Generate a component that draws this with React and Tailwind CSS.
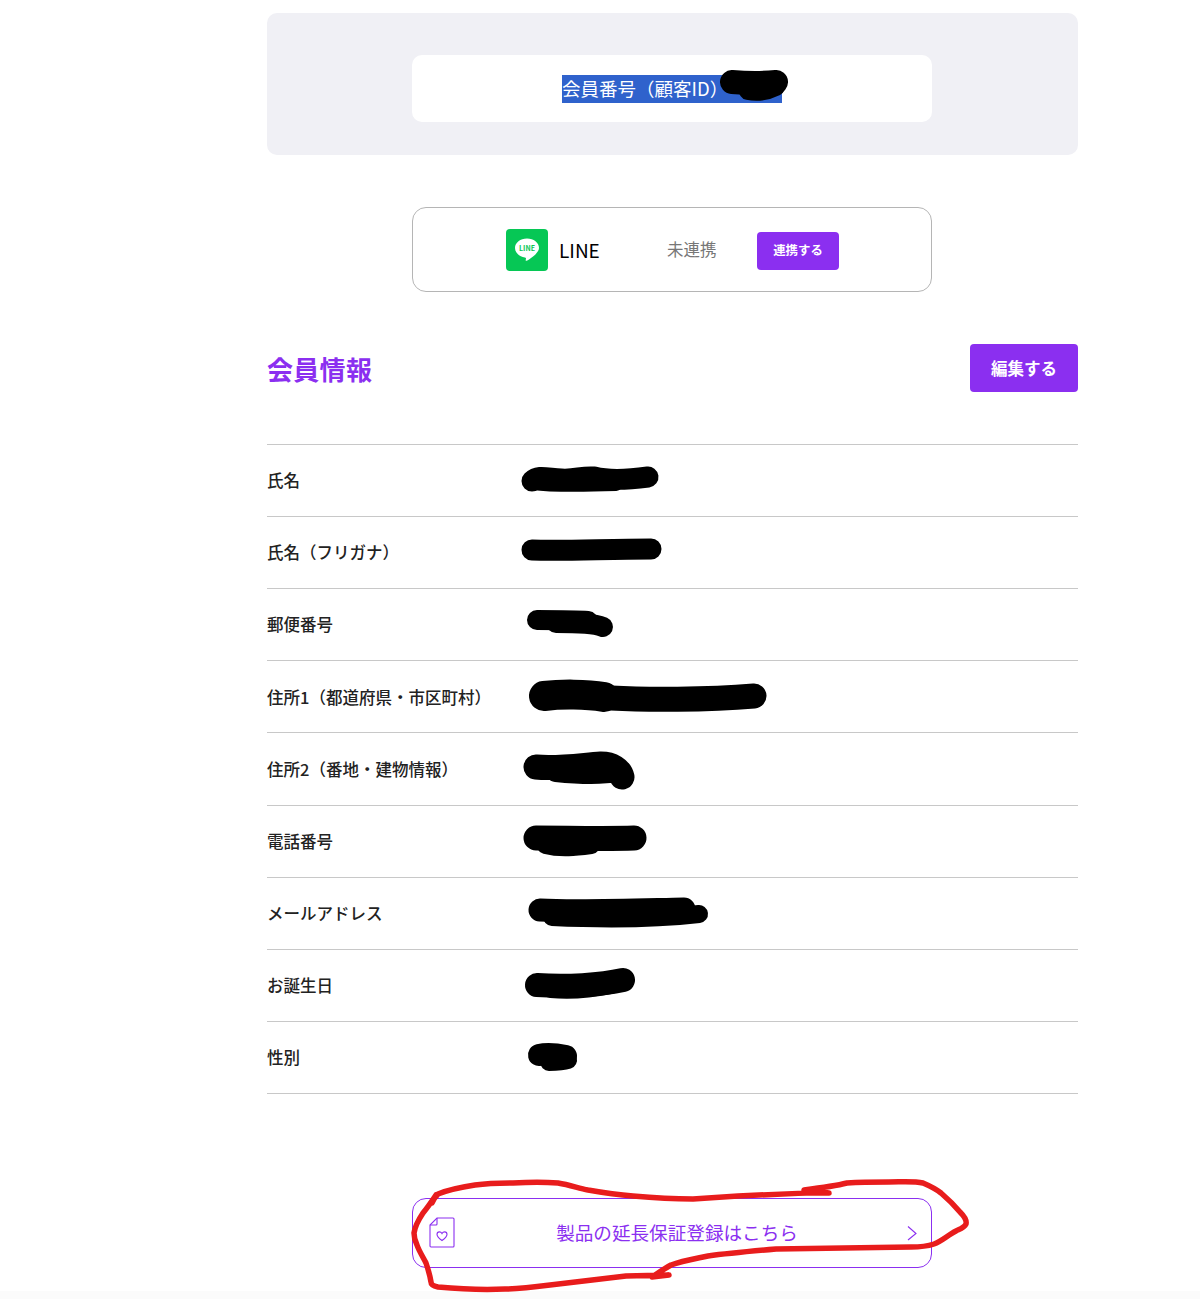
const font = { fontFamily: '"Noto Sans CJK JP", "Noto Sans", sans-serif' };

const rows = [
  {
    label: "氏名",
    marks: [
      { d: "M16 20 C22 14 30 17 45 18 C60 19 65 15 78 16 C90 19 110 19 132 16", w: 21 },
      { d: "M17 22 C40 25 70 24 100 23", w: 14 },
    ],
  },
  { label: "氏名（フリガナ）", marks: [{ d: "M16 17 C50 18 90 16 135 16", w: 21 }] },
  {
    label: "郵便番号",
    marks: [
      { d: "M21 15 C40 15 60 15 72 16", w: 20 },
      { d: "M40 18 C60 18 78 18 87 22", w: 20 },
    ],
  },
  {
    label: "住所1（都道府県・市区町村）",
    marks: [
      { d: "M28 19 C45 17 70 17 88 20", w: 30 },
      { d: "M95 21 C130 23 190 23 238 19", w: 25 },
    ],
  },
  {
    label: "住所2（番地・建物情報）",
    marks: [
      { d: "M20 18 C40 20 60 17 85 15 C96 15 104 20 106 28", w: 25 },
      { d: "M40 22 C60 24 85 25 102 22", w: 22 },
    ],
  },
  {
    label: "電話番号",
    marks: [
      { d: "M20 17 C50 17 90 18 118 17", w: 25 },
      { d: "M30 23 C45 27 60 25 75 23", w: 20 },
    ],
  },
  {
    label: "メールアドレス",
    marks: [
      { d: "M24 17 C60 19 120 17 168 16", w: 23 },
      { d: "M36 24 C80 26 140 26 183 21", w: 18 },
    ],
  },
  {
    label: "お誕生日",
    marks: [
      { d: "M21 20 C50 22 85 20 107 15", w: 24 },
      { d: "M35 24 C55 26 75 24 95 20", w: 18 },
    ],
  },
  {
    label: "性別",
    marks: [
      { d: "M23 18 C32 16 40 17 50 19", w: 22 },
      { d: "M33 25 C40 25 46 25 52 23", w: 18 },
    ],
  },
];

const RedactMark = ({ marks }) => (
  <svg width="260" height="40" viewBox="0 0 260 40" fill="none" className="overflow-visible">
    {marks.map((m) => (
      <path key={m.d} d={m.d} stroke="#000" strokeWidth={m.w} strokeLinecap="round" strokeLinejoin="round" />
    ))}
  </svg>
);

const LineLogo = () => (
  <svg width="42" height="42" viewBox="0 0 42 42" className="shrink-0">
    <rect width="42" height="42" rx="4" fill="#06c755" />
    <path
      d="M21 9.5c-6.7 0-12 4.2-12 9.5 0 4.7 4.2 8.6 9.9 9.4.4.1.9.3 1 .6.1.3.1.8 0 1.1l-.2 1c0 .3-.2 1.1 1 .6 1.200-.5 6.500-3.800 8.900-6.500C31.200 23.500 33 21.400 33 19c0-5.300-5.300-9.500-12-9.500z"
      fill="#fff"
    />
    <text x="21" y="21.500" textAnchor="middle" fontSize="7" fontWeight="700" fill="#06c755" style={font}>
      LINE
    </text>
  </svg>
);

const WarrantyIcon = () => (
  <svg width="26" height="31" viewBox="0 0 26 31" fill="none" stroke="#8b2ff0" strokeWidth="1.100" className="shrink-0">
    <path d="M8 1h16a1 1 0 0 1 1 1v27a1 1 0 0 1-1 1H2a1 1 0 0 1-1-1V8z" />
    <path d="M8 1v6a1 1 0 0 1-1 1H1" />
    <path d="M13 23.500c-3-2.300-5-4-5-6.100 0-1.500 1.100-2.500 2.400-2.500 1.100 0 2 .6 2.600 1.700.6-1.100 1.500-1.700 2.600-1.700 1.300 0 2.400 1 2.400 2.500 0 2.100-2 3.800-5 6.100z" />
  </svg>
);

const App = () => {
  return (
    <div className="relative h-[1299px] w-full overflow-hidden bg-white text-[#222]" style={font}>
      <div className="ml-[267px] w-[811px] pt-[13px]">
        <div className="h-[142px] rounded-[10px] bg-[#f0f0f5] pl-[145px] pt-[42px]">
          <div className="flex h-[67px] w-[520px] items-center justify-center rounded-[10px] bg-white">
            <div className="relative flex h-[28px] w-[220px] items-center whitespace-nowrap bg-[#2f62cc] text-[18.5px] leading-none text-white">
              会員番号（顧客ID）
              <svg width="68" height="33" viewBox="0 0 68 33" fill="none" stroke="#000" strokeLinecap="round" className="absolute left-[158px] top-[-5px]">
                <path d="M12 12 C25 13 45 13 56 12" strokeWidth="24" />
                <path d="M28 21 C38 23 48 21 56 17" strokeWidth="18" />
              </svg>
            </div>
          </div>
        </div>

        <div className="ml-[145px] mt-[52px] flex h-[85px] w-[520px] items-center rounded-[14px] border border-[#b5b5b5] pl-[93px]">
          <LineLogo />
          <span className="ml-[11px] mt-[1px] w-[108px] text-[19px] text-black">LINE</span>
          <span className="w-[90px] text-[16.5px] text-[#777]">未連携</span>
          <button className="mt-[2px] h-[38px] w-[82px] rounded-[4px] bg-[#8b2ff0] text-[12.4px] font-bold text-white">連携する</button>
        </div>

        <div className="mt-[52px] flex h-[48px] items-center justify-between">
          <h2 className="text-[26px] font-bold tracking-[0.3px] text-[#8b2ff0]">会員情報</h2>
          <button className="h-[48px] w-[108px] rounded-[4px] bg-[#8b2ff0] text-[16.5px] font-bold text-white">編集する</button>
        </div>

        <div className="mt-[52px] border-t border-[#c8c8c8]">
          {rows.map((row) => (
            <div key={row.label} className="flex h-[72.11px] items-center border-b border-[#c8c8c8] text-[16.5px] font-medium">
              <div className="w-[249px] shrink-0">{row.label}</div>
              <RedactMark marks={row.marks} />
            </div>
          ))}
        </div>

        <div className="ml-[145px] mt-[104px] flex h-[70px] w-[520px] items-center rounded-[14px] border border-[#8b2ff0] pl-[16px] pr-[13px] text-[#8b2ff0]">
          <WarrantyIcon />
          <span className="flex-1 pb-[2px] pr-[7px] text-center text-[18.6px]">製品の延長保証登録はこちら</span>
          <svg width="12" height="16" viewBox="0 0 12 16" fill="none" stroke="#8b2ff0" strokeWidth="1.100" className="shrink-0">
            <path d="M2 1.500 10 8.500 2 15" />
          </svg>
        </div>
      </div>

      <div className="absolute bottom-0 left-0 h-[8px] w-full bg-[#fbfbfb]" />

      {/* hand-drawn circle over the warranty link */}
      <svg width="1200" height="1299" viewBox="0 0 1200 1299" fill="none" className="pointer-events-none absolute left-0 top-0">
        <path
          d="M432 1203 C434 1198 436 1196 438 1194 C450 1189 462 1187 475 1185 C490 1183 500 1183 513 1183 C530 1182 545 1182 558 1183 C570 1185 578 1188 588 1190 C605 1193 620 1195 633 1196 C655 1198 675 1199 693 1199 C710 1198 725 1197 738 1196 C765 1195 785 1194 806 1193 L829 1193 L804 1190 C820 1188 835 1186 847 1183 C862 1182 876 1182 889 1182 C902 1182 914 1181 923 1183 C930 1186 936 1189 941 1193 C948 1199 955 1206 960 1212 C964 1216 967 1220 966 1224 C964 1228 960 1229 956 1231 C948 1235 942 1241 934 1244 C925 1247 918 1247 911 1247 C865 1248 820 1248 776 1249 C753 1251 730 1253 708 1256 C694 1259 682 1261 671 1265 C664 1269 658 1273 652 1277 L669 1275 L626 1276 C600 1279 575 1282 550 1285 C535 1287 520 1289 505 1289 C482 1290 460 1289 438 1287 C433 1286 431 1284 431 1282 C430 1275 428 1269 426 1263 C423 1257 419 1251 417 1245 C415 1241 414 1237 414 1233 C415 1226 419 1219 423 1213 C428 1207 432 1201 436 1195"
          stroke="#e81c1c"
          strokeWidth="5.500"
          strokeLinecap="round"
          strokeLinejoin="round"
        />
      </svg>
    </div>
  );
};

export default App;
